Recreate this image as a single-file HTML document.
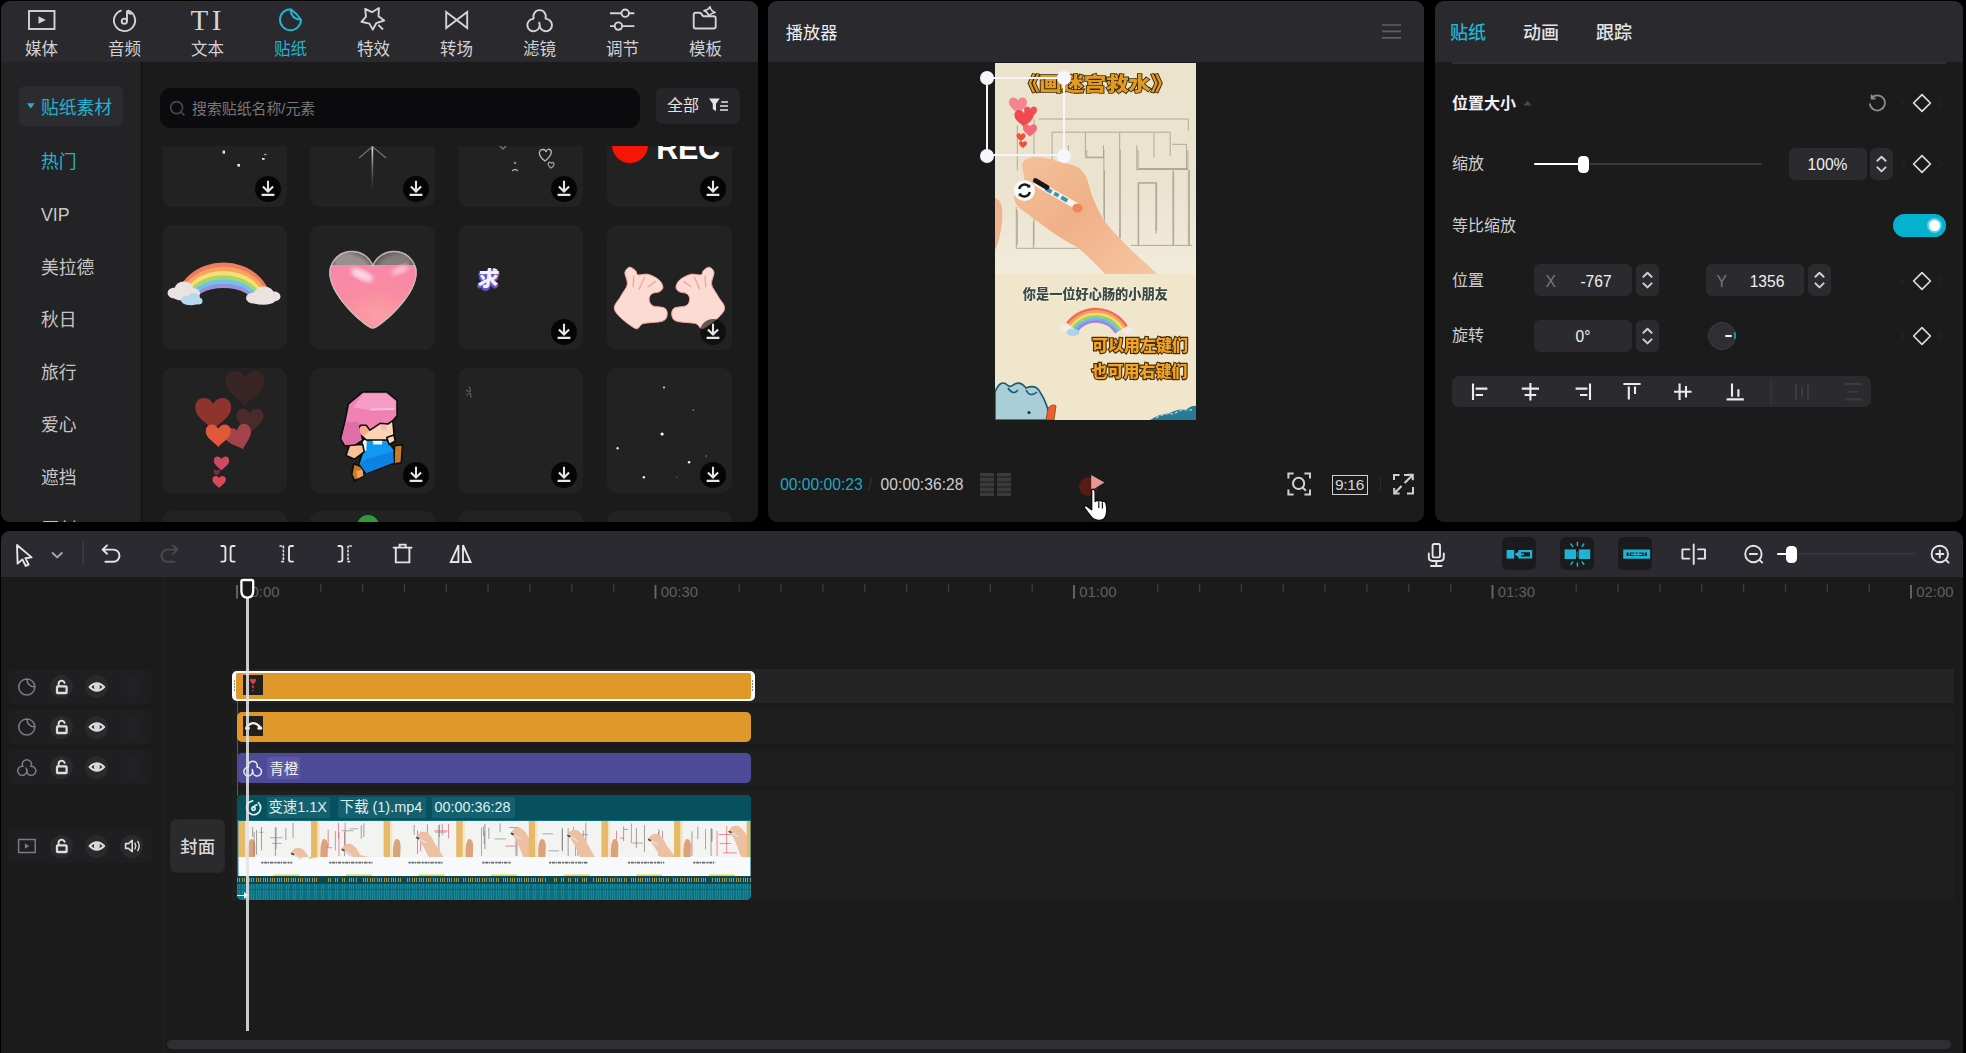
<!DOCTYPE html>
<html lang="zh-CN">
<head>
<meta charset="utf-8">
<title>剪映</title>
<style>
*{box-sizing:border-box;margin:0;padding:0}
html,body{width:1966px;height:1053px;overflow:hidden;background:#000}
body{font-family:"Liberation Sans","Noto Sans CJK SC",sans-serif;color:#e6e6e8;position:relative;font-size:15px}
.layer{position:absolute;left:0;top:0;width:1966px;height:1053px;background:#1b1b1c}
.layer *{position:absolute}
.layer span,.layer tspan,.layer text{position:static}
svg{overflow:visible}
.hdr{background:#29292e}
/* ===== left panel ===== */
#left{clip-path:inset(1px 1208px 531px 1px round 9px)}
.nav{top:0;width:83px;height:62px}
.nav b{left:0;right:0;top:36.5px;font-weight:400;font-size:16.5px;line-height:24px;color:#d2d2d5;text-align:center}
.nav.on b{color:#22b3d1}
.nav svg{left:0;top:0}
.cat{left:41px;font-size:17.8px;line-height:24px;color:#c6c6c9;white-space:nowrap}
.cell{width:125px;height:125px;background:#222223;border-radius:10px;overflow:hidden}
.dl{width:26px;height:26px;border-radius:50%;background:#050505}
.dl svg{left:0;top:0}
.hd{width:14px;height:14px;border-radius:50%;background:#f6f6fc}
.tab{top:20.6px;font-size:18px;line-height:24px;color:#e4e4e6;white-space:nowrap;font-weight:500}
.lb{left:1452px;font-size:16px;line-height:24px;color:#cdcdd0;white-space:nowrap}
.bx{background:#2b2b2f;border-radius:6px}
.vl{font-size:15.6px;line-height:24px;color:#f0f0f2;white-space:nowrap}
.rl{top:580.8px;font-size:14.9px;line-height:22px;color:#5f5f63;white-space:nowrap}
.ct{top:.6px;font-size:14.4px;line-height:24px;color:#dff0f2;white-space:nowrap}
</style>
</head>
<body>
<!-- ================= LEFT PANEL ================= -->
<div class="layer" id="left">
  <div class="hdr" style="left:0;top:0;width:760px;height:62px"></div>
  <div id="side" style="left:0;top:62px;width:141px;height:470px;background:#232325"></div>
  <div style="left:140.8px;top:62px;width:1.2px;height:470px;background:#0f0f11"></div>
  <div class="nav" style="left:0"><svg width="83" height="62" fill="none" stroke="#d4d4d6" stroke-width="1.9"><rect x="29" y="11" width="25.5" height="18"/><path d="M38.5 16.2 L45.8 20 L38.5 23.8Z" fill="#d4d4d6" stroke="none"/></svg><b>媒体</b></div>
  <div class="nav" style="left:83px"><svg width="83" height="62" fill="none" stroke="#d4d4d6" stroke-width="1.9"><path d="M44.8 10.4 A10.6 10.6 0 1 1 38.6 10.3"/><circle cx="41.3" cy="21.2" r="2.6"/><path d="M44 21.2 V10.6 Q45.2 13.4 48.6 14"/></svg><b>音频</b></div>
  <div class="nav" style="left:166px"><span style="position:absolute;left:24.5px;top:3.5px;font-family:'Liberation Serif',serif;font-size:29px;line-height:32px;letter-spacing:3.5px;color:#d4d4d6">TI</span><b>文本</b></div>
  <div class="nav on" style="left:249px"><svg width="83" height="62" fill="none" stroke="#22b3d1" stroke-width="2"><path d="M41.5 9.2 A10.5 10.5 0 1 0 52 19.7 Q47.6 13.2 41.5 9.2 Q42 19.2 52 19.7" stroke-linejoin="round"/></svg><b>贴纸</b></div>
  <div class="nav" style="left:332px"><svg width="83" height="62" fill="none" stroke="#d4d4d6" stroke-width="1.9" stroke-linejoin="miter"><path d="M33.2 8.9 L40 12.2 L46.9 8 L46.5 16.3 L52.2 20.5 L44.2 23.2 L40.8 29.6 L37.4 23.6 L29.4 21.8 L34 16.7Z" stroke-linejoin="round"/><path d="M46.3 24.9 L51 29.5"/></svg><b>特效</b></div>
  <div class="nav" style="left:415px"><svg width="83" height="62" fill="none" stroke="#d4d4d6" stroke-width="1.9" stroke-linejoin="miter"><path d="M31.2 12 L52.2 28 V12 L31.2 28Z"/></svg><b>转场</b></div>
  <div class="nav" style="left:498px"><svg width="83" height="62" fill="none" stroke="#d4d4d6" stroke-width="1.9"><path d="M35.9 18.8 A6.2 6.2 0 1 1 47.3 18.8"/><path d="M40.9 22 A6.2 6.2 0 1 1 35.9 18.9"/><path d="M47.3 18.9 A6.2 6.2 0 1 1 41.6 24.6"/></svg><b>滤镜</b></div>
  <div class="nav" style="left:581px"><svg width="83" height="62" fill="none" stroke="#d4d4d6" stroke-width="1.9"><path d="M29 13.2 H40.4 M48 13.2 H53.4 M29 26.1 H33.6 M41.2 26.1 H53.4"/><circle cx="44.2" cy="13.2" r="3.7"/><circle cx="37.4" cy="26.1" r="3.7"/></svg><b>调节</b></div>
  <div class="nav" style="left:664px"><svg width="83" height="62" fill="none" stroke="#d4d4d6" stroke-width="1.9" stroke-linejoin="round"><path d="M31.7 12.7 H35.6 Q36.6 12.7 37.2 13.6 L38.4 15.4 Q39 16.3 40 16.3 H49.7 Q51.7 16.3 51.7 18.3 V26.5 Q51.7 28.5 49.7 28.5 H31.7 Q29.7 28.5 29.7 26.5 V14.7 Q29.7 12.7 31.7 12.7Z"/><path d="M46 6.8 Q46.8 10.8 51.2 12.5 Q47 13.2 44.9 16 Q44 12.2 40 10.6 Q44.4 10 46 6.8Z" fill="#29292e" stroke-width="1.7"/></svg><b>模板</b></div>
  <div style="left:18.5px;top:86px;width:104.5px;height:40px;background:#2c2c30;border-radius:6px"></div>
  <svg style="left:25.6px;top:102.4px" width="10" height="8"><path d="M1 1.2 H8.6 L4.8 6.4Z" fill="#22b3d1"/></svg>
  <div class="cat" style="top:95.5px;color:#22b3d1;font-size:17.8px">贴纸素材</div>
  <div class="cat" style="top:150.0px;color:#22b3d1">热门</div>
  <div class="cat" style="top:203.0px">VIP</div>
  <div class="cat" style="top:255.5px">美拉德</div>
  <div class="cat" style="top:308.0px">秋日</div>
  <div class="cat" style="top:360.5px">旅行</div>
  <div class="cat" style="top:413.0px">爱心</div>
  <div class="cat" style="top:465.5px">遮挡</div>
  <div class="cat" style="top:518.0px">原创</div>
  <div style="left:160px;top:88px;width:480px;height:40px;background:#0b0b0d;border-radius:11px"></div>
  <svg style="left:168px;top:99px" width="20" height="20" fill="none" stroke="#4a4a4e" stroke-width="1.6"><circle cx="8.6" cy="8.6" r="6"/><path d="M13 13 L16.4 16.4"/></svg>
  <div style="left:192px;top:98px;font-size:14.9px;line-height:22px;color:#77777b;white-space:nowrap">搜索贴纸名称/元素</div>
  <div style="left:656px;top:88px;width:84px;height:36px;background:#26262a;border-radius:6px"></div>
  <div style="left:667px;top:94px;font-size:16px;line-height:24px;color:#e4e4e6;white-space:nowrap">全部</div>
  <svg style="left:708px;top:97px" width="22" height="18" fill="#e4e4e6"><path d="M1 1.6 H11.8 L8 6.8 V14.2 L4.8 12 V6.8Z"/><path d="M13.2 4.2 H20 V5.8 H13.2Z M12 8.2 H20 V9.8 H12Z M12 12.2 H20 V13.8 H12Z"/></svg>
  <div id="grid" style="left:141px;top:146px;width:620px;height:400px;overflow:hidden">
   <div style="left:-141px;top:-146px;width:760px;height:560px">
    <!-- row 0 -->
    <div class="cell" style="left:161.5px;top:82px">
      <svg style="left:0;top:0" width="125" height="125" fill="#e8e8e8"><rect x="60.6" y="68.6" width="2.4" height="3"/><rect x="102" y="71.8" width="2.6" height="1.4" opacity=".6"/><rect x="100" y="76" width="2.6" height="1.8"/><rect x="75.4" y="82" width="2.6" height="2.6"/></svg>
      <div class="dl" style="left:93.1px;top:93.6px"><svg width="26" height="26" fill="none" stroke="#e6e6e6" stroke-width="2.1"><path d="M13 4.8 V15 M7.9 10.6 L13 15.6 L18.1 10.6 M6.6 18.9 H19.4"/></svg></div>
    </div>
    <div class="cell" style="left:309.9px;top:82px">
      <svg style="left:0;top:0" width="125" height="125" fill="none"><defs><linearGradient id="ag" x1="0" y1="0" x2="0" y2="1"><stop offset="0" stop-color="#f4f0f8"/><stop offset="1" stop-color="#6a6670" stop-opacity="0"/></linearGradient></defs><rect x="61.6" y="64" width="1.6" height="46" fill="url(#ag)"/><path d="M49 76 L62.4 64.5 L76 76" stroke="#77737c" stroke-width="1.1"/></svg>
      <div class="dl" style="left:93.1px;top:93.6px"><svg width="26" height="26" fill="none" stroke="#e6e6e6" stroke-width="2.1"><path d="M13 4.8 V15 M7.9 10.6 L13 15.6 L18.1 10.6 M6.6 18.9 H19.4"/></svg></div>
    </div>
    <div class="cell" style="left:458.3px;top:82px">
      <svg style="left:0;top:0" width="125" height="125" fill="none" stroke="#bdbdbd" stroke-width="1.3"><path d="M87 79 C80 74 80 68 84.5 67.5 C87 67.3 88 69 88 70 C88.5 67.5 91 66.5 92.5 68 C95 71 91 76 87 79Z"/><path d="M93 86 C89.5 83.5 89.5 80.5 91.6 80.2 C92.8 80.2 93.2 81 93.3 81.6 C93.6 80.6 94.8 80 95.6 80.8 C96.8 82.4 95 84.8 93 86Z" stroke="#999"/><path d="M54 89 Q57 86 60 89" stroke="#aaa"/><path d="M42 64 L45 67 L48 64" stroke="#777"/><circle cx="57" cy="81" r=".6" stroke="#888"/></svg>
      <div class="dl" style="left:93.1px;top:93.6px"><svg width="26" height="26" fill="none" stroke="#e6e6e6" stroke-width="2.1"><path d="M13 4.8 V15 M7.9 10.6 L13 15.6 L18.1 10.6 M6.6 18.9 H19.4"/></svg></div>
    </div>
    <div class="cell" style="left:606.7px;top:82px">
      <div style="left:5.5px;top:45px;width:35.5px;height:35.5px;border-radius:50%;background:#f71505"></div>
      <div style="left:49.5px;top:48.4px;font-size:30.6px;line-height:36px;font-weight:700;color:#fff;letter-spacing:-.3px">REC</div>
      <div class="dl" style="left:93.1px;top:93.6px"><svg width="26" height="26" fill="none" stroke="#e6e6e6" stroke-width="2.1"><path d="M13 4.8 V15 M7.9 10.6 L13 15.6 L18.1 10.6 M6.6 18.9 H19.4"/></svg></div>
    </div>
    <!-- row 1 -->
    <div class="cell" style="left:161.5px;top:225px"><svg style="left:0;top:0" width="125" height="125"><defs><clipPath id="rc"><path d="M0 0 H125 V66 L86 76 H36 L0 62Z"/></clipPath><filter id="b1"><feGaussianBlur stdDeviation=".5"/></filter></defs><g clip-path="url(#rc)" filter="url(#b1)"><path d="M13.3 80 A48.2 42.6 0 0 1 109.7 80Z" fill="#ee7e62"/><path d="M16.2 80 A45.3 38.3 0 0 1 106.8 80Z" fill="#f6a75e"/><path d="M19.1 80 A42.4 34.1 0 0 1 103.9 80Z" fill="#f5df72"/><path d="M21.9 80 A39.6 29.8 0 0 1 101.1 80Z" fill="#a4d76c"/><path d="M24.8 80 A36.7 25.5 0 0 1 98.2 80Z" fill="#6fc0f1"/><path d="M27.7 80 A33.8 21.3 0 0 1 95.3 80Z" fill="#9a8fd8"/><path d="M30.6 80 A30.9 17.0 0 0 1 92.4 80Z" fill="#212122"/></g>
<g fill="#ebe3df"><ellipse cx="13" cy="68" rx="7.5" ry="5.5"/><ellipse cx="22" cy="64.5" rx="9.5" ry="8"/><ellipse cx="31" cy="68.5" rx="7" ry="5.5"/><ellipse cx="20" cy="71" rx="9" ry="4.5"/></g>
<g fill="#b7d9ee"><ellipse cx="25" cy="75" rx="6" ry="4.5"/><ellipse cx="32" cy="73" rx="6" ry="5"/><ellipse cx="36" cy="76" rx="4.5" ry="3.5"/><ellipse cx="29" cy="77.5" rx="7" ry="2.8"/></g>
<g fill="#ebe3df"><ellipse cx="92" cy="73" rx="8" ry="5.5"/><ellipse cx="102" cy="69" rx="10" ry="7.5"/><ellipse cx="112" cy="71.5" rx="6.5" ry="5"/><ellipse cx="101" cy="75.5" rx="12" ry="4.3"/></g></svg></div>
    <div class="cell" style="left:309.9px;top:225px"><svg style="left:0;top:0" width="125" height="125"><defs><clipPath id="hc"><path d="M62.8 39 C56 22 27 20 20 42 C14 64 46 94 58.5 102 Q62.8 105 67 102 C80 94 112 64 106 42 C99 20 70 22 62.8 39Z"/></clipPath><radialGradient id="hg" cx=".55" cy=".72" r=".7"><stop offset="0" stop-color="#fca0a4"/><stop offset=".5" stop-color="#f98ca2"/><stop offset="1" stop-color="#f788a8"/></radialGradient><filter id="b2"><feGaussianBlur stdDeviation="2.2"/></filter></defs>
<path d="M62.8 39 C56 22 27 20 20 42 C14 64 46 94 58.5 102 Q62.8 105 67 102 C80 94 112 64 106 42 C99 20 70 22 62.8 39Z" fill="#5e5959"/><g clip-path="url(#hc)"><path d="M22 28 Q40 22 58 36 L62 44 H24Z" fill="#9a9090" filter="url(#b2)"/><path d="M70 36 Q84 24 100 30 L102 44 H66Z" fill="#857c7c" filter="url(#b2)"/><rect x="10" y="40" width="105" height="70" fill="url(#hg)"/><ellipse cx="52" cy="50" rx="12" ry="5" fill="#fdd6e6" filter="url(#b2)" transform="rotate(25 52 50)"/><ellipse cx="90" cy="45" rx="9" ry="3.5" fill="#fcc4d8" filter="url(#b2)" transform="rotate(-25 90 45)"/><path d="M62.8 39 C56 22 27 20 20 42 C14 64 46 94 58.5 102 Q62.8 105 67 102 C80 94 112 64 106 42 C99 20 70 22 62.8 39Z" fill="none" stroke="#c9bcbc" stroke-width="3" opacity=".9"/></g></svg></div>
    <div class="cell" style="left:458.3px;top:225px"><div style="left:20px;top:40.6px;font-size:21px;line-height:26px;font-weight:900;color:#f4f2ff;text-shadow:1px 2px 0 #6a5cc8,-1px 2px 0 #6a5cc8,0 3px 1px #5a4cb8;transform:skewX(-6deg)">求</div><div class="dl" style="left:93.1px;top:93.6px"><svg width="26" height="26" fill="none" stroke="#e6e6e6" stroke-width="2.1"><path d="M13 4.8 V15 M7.9 10.6 L13 15.6 L18.1 10.6 M6.6 18.9 H19.4"/></svg></div></div>
    <div class="cell" style="left:606.7px;top:225px"><svg style="left:0;top:0" width="125" height="125"><path d="M17.9 47.5 C18.3 44.6 20.9 42.5 22.6 42.2 C24.4 41.9 27.2 44.4 28.6 45.7 C30.0 47.0 28.9 49.3 31.0 49.9 C33.0 50.5 37.6 48.5 41.1 49.3 C44.5 50.1 49.3 52.6 51.7 54.6 C54.2 56.7 55.7 59.8 55.9 61.8 C56.1 63.7 54.8 65.3 52.9 66.5 C51.1 67.7 46.4 67.5 44.6 68.9 C42.8 70.3 42.0 72.8 42.2 74.8 C42.4 76.8 43.2 79.4 45.8 80.8 C48.4 82.1 55.3 81.6 57.7 83.1 C60.1 84.7 60.5 88.1 60.1 90.3 C59.7 92.4 59.3 94.8 55.3 96.2 C51.3 97.6 40.9 97.4 36.3 98.6 C31.8 99.8 32.7 105.5 28.0 103.3 C23.2 101.1 10.2 90.9 7.8 85.5 C5.4 80.2 11.7 75.6 13.7 71.3 C15.8 66.9 19.6 63.3 20.3 59.4 C21.0 55.4 17.5 50.4 17.9 47.5Z M107.0 47.5 C106.6 44.6 104.0 42.5 102.2 42.2 C100.4 41.9 97.7 44.4 96.3 45.7 C94.9 47.0 96.0 49.3 93.9 49.9 C91.8 50.5 87.3 48.5 83.8 49.3 C80.3 50.1 75.6 52.6 73.1 54.6 C70.6 56.7 69.2 59.8 69.0 61.8 C68.8 63.7 70.1 65.3 71.9 66.5 C73.8 67.7 78.5 67.5 80.2 68.9 C82.0 70.3 82.8 72.8 82.6 74.8 C82.4 76.8 81.6 79.4 79.1 80.8 C76.5 82.1 69.6 81.6 67.2 83.1 C64.8 84.7 64.4 88.1 64.8 90.3 C65.2 92.4 65.6 94.8 69.6 96.2 C73.5 97.6 84.0 97.4 88.6 98.6 C93.1 99.8 92.1 105.5 96.9 103.3 C101.6 101.1 114.7 90.9 117.1 85.5 C119.4 80.2 113.2 75.6 111.1 71.3 C109.0 66.9 105.3 63.3 104.6 59.4 C103.9 55.4 107.4 50.4 107.0 47.5Z" fill="#fbdbd2" stroke="#f2a49c" stroke-width="1"/><path d="M26.8 51.1 L26.2 61.8 M37.5 52.3 L32.1 64.1 M48.2 56.4 L41.1 61.8 M98.1 51.1 L98.7 61.8 M87.4 52.3 L92.7 64.1 M76.7 56.4 L83.8 61.8" stroke="#f3a7a0" stroke-width="1.4" fill="none" stroke-linecap="round"/></svg><div class="dl" style="left:93.1px;top:93.6px;background:rgba(5,5,5,.62)"><svg width="26" height="26" fill="none" stroke="#e6e6e6" stroke-width="2.1"><path d="M13 4.8 V15 M7.9 10.6 L13 15.6 L18.1 10.6 M6.6 18.9 H19.4"/></svg></div></div>
    <!-- row 2 -->
    <div class="cell" style="left:161.5px;top:368px"><svg style="left:0;top:0" width="125" height="125"><path d="M83.0 9.2 C78.1 -0.5 63.5 0.5 63.5 13.2 C63.5 23.9 76.2 29.7 83.0 37.5 C89.8 29.7 102.5 23.9 102.5 13.2 C102.5 0.5 87.9 -0.5 83.0 9.2Z" fill="#3a2525" opacity="1"/><path d="M88.0 45.2 C84.6 38.5 74.5 39.2 74.5 48.0 C74.5 55.4 83.3 59.4 88.0 64.8 C92.7 59.4 101.5 55.4 101.5 48.0 C101.5 39.2 91.4 38.5 88.0 45.2Z" fill="#4a2a2b" opacity="1"/><path d="M51.2 36.0 C46.7 27.0 33.2 27.9 33.2 39.6 C33.2 49.5 44.9 54.9 51.2 62.1 C57.5 54.9 69.2 49.5 69.2 39.6 C69.2 27.9 55.7 27.0 51.2 36.0Z" fill="#8e342c" opacity="1"/><path d="M77.0 62.2 C73.6 55.5 63.5 56.2 63.5 65.0 C63.5 72.4 72.3 76.4 77.0 81.8 C81.7 76.4 90.5 72.4 90.5 65.0 C90.5 56.2 80.4 55.5 77.0 62.2Z" fill="#a3424b" transform="rotate(-18 77 69)" opacity="1"/><path d="M56.3 60.8 C53.2 54.5 43.8 55.1 43.8 63.2 C43.8 70.1 51.9 73.9 56.3 78.9 C60.7 73.9 68.8 70.1 68.8 63.2 C68.8 55.1 59.4 54.5 56.3 60.8Z" fill="#e2583b" opacity="1"/><path d="M59.5 91.1 C57.6 87.2 51.8 87.6 51.8 92.7 C51.8 96.9 56.8 99.3 59.5 102.4 C62.2 99.3 67.2 96.9 67.2 92.7 C67.2 87.6 61.4 87.2 59.5 91.1Z" fill="#cc4a63" opacity="1"/><path d="M54.7 102.9 C53.9 101.2 51.5 101.4 51.5 103.5 C51.5 105.3 53.6 106.3 54.7 107.6 C55.8 106.3 58.0 105.3 58.0 103.5 C58.0 101.4 55.5 101.2 54.7 102.9Z" fill="#7a2f3b" opacity="1"/><path d="M57.1 110.1 C55.4 106.8 50.4 107.1 50.4 111.5 C50.4 115.2 54.7 117.2 57.1 119.9 C59.5 117.2 63.9 115.2 63.9 111.5 C63.9 107.1 58.8 106.8 57.1 110.1Z" fill="#d94a56" opacity="1"/></svg></div>
    <div class="cell" style="left:309.9px;top:368px"><svg style="left:0;top:0" width="125" height="125"><defs><filter id="gb"><feGaussianBlur stdDeviation=".35"/></filter></defs><g filter="url(#gb)"><path d="M84.5 77.8 L92.5 76.6 L91.3 94.8 L83.9 96.0Z" fill="#c8792b" stroke="#0b0b0b" stroke-width="1.6" stroke-linejoin="round"/><path d="M43.8 95.7 L52.8 99.3 L53.3 107.7 L44.6 112.7 L41.7 106.7Z" fill="#c8792b" stroke="#0b0b0b" stroke-width="1.6" stroke-linejoin="round"/><path d="M46.2 102.9 L52.8 101.7 L53.3 107.7 L47.4 110.7Z" fill="#f2a25a"/><path d="M52.8 71.6 L76.7 71.6 L84.1 81.4 L84.1 94.8 L71.9 99.6 L56.3 105.5 L48.9 96.0 L52.8 83.8Z" fill="#0b9af0" stroke="#0b0b0b" stroke-width="1.6" stroke-linejoin="round"/><path d="M56.3 90.9 L82.7 83.8 L83.9 94.5 L71.9 99.3 L56.3 105.3 L49.4 96.0Z" fill="#0a82e2"/><path d="M52.8 72.0 L56.9 72.0 L56.3 82.6 L52.8 83.8Z" fill="#eef8ff"/><path d="M62.3 72.0 L72.5 72.0 L71.9 76.6 L63.5 76.6Z" fill="#eef8ff"/><path d="M56.3 56.2 L82.7 51.5 L84.1 67.0 L76.7 72.0 L56.3 72.0 L48.6 65.2 L49.2 58.6Z" fill="#fbd4b4" stroke="#0b0b0b" stroke-width="1.6" stroke-linejoin="round"/><path d="M48.6 58.6 L56.3 57.4 L58.7 63.4 L53.9 67.6 L48.6 65.2Z" fill="#f7a98a"/><path d="M70.1 56.2 L76.7 56.8 L76.7 62.2 L71.9 62.2Z" fill="#f6b8c6"/><path d="M39.6 76.8 L52.8 76.6 L54.2 83.8 L44.6 91.2 L36.0 87.6Z" fill="#fbc096" stroke="#0b0b0b" stroke-width="1.6" stroke-linejoin="round"/><path d="M76.7 69.4 L83.9 67.0 L85.3 73.0 L79.1 76.6Z" fill="#fbd4b4" stroke="#0b0b0b" stroke-width="1.6" stroke-linejoin="round"/><path d="M52.8 23.9 L76.7 23.9 L87.1 32.3 L87.1 47.9 L82.7 52.7 L77.9 56.0 L70.1 55.3 L65.3 58.6 L59.9 62.2 L56.3 57.2 L50.4 57.2 L47.7 62.2 L49.2 67.0 L53.3 72.0 L45.6 76.8 L34.8 78.0 L30.6 70.8 L34.8 53.8 L38.4 35.9Z" fill="#f081b2" stroke="#0b0b0b" stroke-width="1.6" stroke-linejoin="round"/><path d="M52.8 25.7 L76.1 25.7 L85.3 33.3 L85.3 41.9 L59.9 41.9 L43.2 39.5Z" fill="#f79cc4"/><path d="M36.0 53.8 L48.0 53.8 L51.6 70.6 L45.6 76.0 L35.4 76.8 L31.8 70.6Z" fill="#dd6ea6"/><path d="M59.9 40.7 L83.9 40.1 L83.9 41.9 L59.9 42.6Z" fill="#fbc2dc"/></g></svg><div class="dl" style="left:93.1px;top:93.6px"><svg width="26" height="26" fill="none" stroke="#e6e6e6" stroke-width="2.1"><path d="M13 4.8 V15 M7.9 10.6 L13 15.6 L18.1 10.6 M6.6 18.9 H19.4"/></svg></div></div>
    <div class="cell" style="left:458.3px;top:368px"><svg style="left:0;top:0" width="125" height="125" stroke="#6c6c6c" stroke-width="1" fill="none"><path d="M8 22 L12 24 M8.5 27.5 L12 24.6 M11.5 18.5 L12.5 23.5 M12.5 25 L13 29.5"/></svg><div class="dl" style="left:93.1px;top:93.6px"><svg width="26" height="26" fill="none" stroke="#e6e6e6" stroke-width="2.1"><path d="M13 4.8 V15 M7.9 10.6 L13 15.6 L18.1 10.6 M6.6 18.9 H19.4"/></svg></div></div>
    <div class="cell" style="left:606.7px;top:368px"><svg style="left:0;top:0" width="125" height="125"><circle cx="57.0" cy="19.6" r="1.0" fill="#ddd"/><circle cx="86.3" cy="42.0" r="0.8" fill="#999"/><circle cx="55.1" cy="66.0" r="1.6" fill="#fff"/><circle cx="10.6" cy="80.2" r="1.2" fill="#ddd"/><circle cx="82.1" cy="94.2" r="1.3" fill="#eee"/><circle cx="36.9" cy="109.2" r="1.2" fill="#eee"/><circle cx="69.8" cy="109.0" r="0.7" fill="#666"/><circle cx="99.3" cy="88.0" r="0.8" fill="#888"/></svg><div class="dl" style="left:93.1px;top:93.6px"><svg width="26" height="26" fill="none" stroke="#e6e6e6" stroke-width="2.1"><path d="M13 4.8 V15 M7.9 10.6 L13 15.6 L18.1 10.6 M6.6 18.9 H19.4"/></svg></div></div>
    <!-- row 3 -->
    <div class="cell" style="left:161.5px;top:510.5px"></div>
    <div class="cell" style="left:309.9px;top:510.5px"><div style="left:47px;top:4px;width:22px;height:22px;border-radius:50%;background:#2e9a3c"></div></div>
    <div class="cell" style="left:458.3px;top:510.5px"></div>
    <div class="cell" style="left:606.7px;top:510.5px"></div>
   </div>
  </div>
</div>
<!-- ================= PLAYER ================= -->
<div class="layer" id="player" style="clip-path:inset(1px 542px 531px 768px round 9px)">
  <div class="hdr" style="left:760px;top:0;width:670px;height:62px"></div>
  <div style="left:785.8px;top:20.8px;font-size:17.2px;line-height:24px;color:#f0f0f2;white-space:nowrap">播放器</div>
  <svg style="left:1380px;top:22px" width="24" height="20" stroke="#5f5f64" stroke-width="1.7"><path d="M2 3 H21 M2 9.4 H21 M2 15.8 H21"/></svg>
  <!-- video -->
  <div style="left:995px;top:63px;width:201px;height:357px;background:#f0e6cc;overflow:hidden">
   <svg style="left:-995px;top:-63px" width="1966" height="1053" fill="none">
    <defs><linearGradient id="pg" x1="0" y1="0" x2="0" y2="1"><stop offset="0" stop-color="#ece3cd"/><stop offset=".6" stop-color="#ebe3d0"/><stop offset="1" stop-color="#f2ecdc"/></linearGradient>
    <linearGradient id="hg2" x1="0" y1="0" x2="1" y2="1"><stop offset="0" stop-color="#f4c29a"/><stop offset=".45" stop-color="#f0b088"/><stop offset="1" stop-color="#f6c8a4"/></linearGradient>
    <clipPath id="pc"><rect x="995" y="63" width="201" height="211"/></clipPath><clipPath id="vrc"><rect x="1050" y="300" width="100" height="33.5"/></clipPath><filter id="vb"><feGaussianBlur stdDeviation=".6"/></filter><filter id="vb2"><feGaussianBlur stdDeviation="1.2"/></filter></defs>
    <rect x="995" y="63" width="201" height="211" fill="url(#pg)"/>
    <g filter="url(#vb)"><path d="M1038.5 119.0 L1188.3 119.0" stroke="#a49e90" stroke-width=".85"/><path d="M1188.3 119.0 L1188.3 130.8" stroke="#a49e90" stroke-width=".85"/><path d="M1017.3 125.3 L1017.3 170.4" stroke="#a49e90" stroke-width=".85"/><path d="M1034.0 119.0 L1034.0 156.0" stroke="#a49e90" stroke-width=".85"/><path d="M1052.1 132.2 L1170.2 132.2" stroke="#a49e90" stroke-width=".85"/><path d="M1052.1 132.2 L1052.1 163.2" stroke="#a49e90" stroke-width=".85"/><path d="M1068.3 145.2 L1068.3 156.0" stroke="#a49e90" stroke-width=".85"/><path d="M1085.4 132.2 L1085.4 157.8" stroke="#a49e90" stroke-width=".85"/><path d="M1085.4 157.8 L1103.5 157.8" stroke="#a49e90" stroke-width=".85"/><path d="M1103.5 145.2 L1103.5 157.8" stroke="#a49e90" stroke-width=".85"/><path d="M1119.7 132.2 L1119.7 244.9" stroke="#a49e90" stroke-width=".85"/><path d="M1136.8 145.2 L1136.8 170.4" stroke="#a49e90" stroke-width=".85"/><path d="M1136.8 169.5 L1188.3 169.5" stroke="#a49e90" stroke-width=".85"/><path d="M1154.0 132.2 L1154.0 157.8" stroke="#a49e90" stroke-width=".85"/><path d="M1170.2 132.2 L1170.2 156.0" stroke="#a49e90" stroke-width=".85"/><path d="M1172.0 144.3 L1186.5 144.3" stroke="#a49e90" stroke-width=".85"/><path d="M1186.5 144.3 L1186.5 168.6" stroke="#a49e90" stroke-width=".85"/><path d="M1188.3 170.4 L1188.3 244.9" stroke="#a49e90" stroke-width=".85"/><path d="M1138.7 183.1 L1155.8 183.1" stroke="#a49e90" stroke-width=".85"/><path d="M1138.7 183.1 L1138.7 244.9" stroke="#a49e90" stroke-width=".85"/><path d="M1155.8 183.1 L1155.8 233.6" stroke="#a49e90" stroke-width=".85"/><path d="M1172.9 170.4 L1172.9 244.9" stroke="#a49e90" stroke-width=".85"/><path d="M1017.3 210.1 L1017.3 244.9" stroke="#a49e90" stroke-width=".85"/><path d="M1034.0 217.3 L1034.0 244.9" stroke="#a49e90" stroke-width=".85"/><path d="M1104.4 170.4 L1104.4 244.9" stroke="#a49e90" stroke-width=".85"/><path d="M1016.3 207.0 L1016.3 248.3" stroke="#a49e90" stroke-width=".85"/><path d="M1016.3 248.3 L1078.3 248.3" stroke="#a49e90" stroke-width=".85"/><path d="M1033.4 221.2 L1033.4 248.3" stroke="#a49e90" stroke-width=".85"/><path d="M1120.3 150.0 L1120.3 238.3" stroke="#a49e90" stroke-width=".85"/><path d="M1138.1 168.5 L1187.9 168.5" stroke="#a49e90" stroke-width=".85"/><path d="M1138.1 150.0 L1138.1 168.5" stroke="#a49e90" stroke-width=".85"/><path d="M1187.9 150.0 L1187.9 168.5" stroke="#a49e90" stroke-width=".85"/><path d="M1138.1 182.8 L1156.6 182.8" stroke="#a49e90" stroke-width=".85"/><path d="M1138.1 182.8 L1138.1 245.4" stroke="#a49e90" stroke-width=".85"/><path d="M1156.6 182.8 L1156.6 231.2" stroke="#a49e90" stroke-width=".85"/><path d="M1173.7 171.4 L1173.7 245.4" stroke="#a49e90" stroke-width=".85"/><path d="M1189.4 169.9 L1189.4 245.4" stroke="#a49e90" stroke-width=".85"/><path d="M1131.0 245.4 L1192.2 245.4" stroke="#a49e90" stroke-width=".85"/><path d="M1103.9 150.0 L1103.9 217.0" stroke="#a49e90" stroke-width=".85"/><path d="M1086.8 150.0 L1086.8 157.1" stroke="#a49e90" stroke-width=".85"/><path d="M1086.8 157.1 L1103.9 157.1" stroke="#a49e90" stroke-width=".85"/></g>
    <path d="M995 198 Q1004 200 1002 222 Q1000 240 995 250Z" fill="#f0b48c" filter="url(#vb)"/>
    <g filter="url(#vb)"><path d="M1023.4 161.4 C1024.9 159.5 1027.8 158.0 1031.3 157.4 C1034.7 156.8 1039.6 157.2 1044.1 157.8 C1048.6 158.5 1054.0 160.3 1058.3 161.4 C1062.6 162.5 1066.2 163.1 1069.7 164.2 C1073.3 165.4 1076.8 166.1 1079.7 168.5 C1082.5 170.9 1084.9 174.5 1086.8 178.5 C1088.7 182.5 1089.2 187.5 1091.1 192.7 C1093.0 198.0 1095.6 204.6 1098.2 209.8 C1100.8 215.1 1103.2 219.3 1106.8 224.1 C1110.3 228.8 1115.1 233.6 1119.6 238.3 C1124.1 243.1 1129.3 248.3 1133.8 252.6 C1138.3 256.8 1142.8 260.4 1146.6 264.0 C1150.4 267.5 1154.9 271.6 1156.6 273.9 C1158.3 276.3 1164.9 277.5 1156.6 278.2 C1148.3 278.9 1115.5 279.1 1106.8 278.2 C1098.0 277.3 1106.5 275.9 1103.9 272.8 C1101.3 269.7 1095.4 263.8 1091.1 259.7 C1086.8 255.6 1083.0 251.7 1078.3 248.3 C1073.5 244.8 1067.3 242.0 1062.6 239.0 C1057.8 236.1 1053.8 233.3 1049.8 230.5 C1045.7 227.6 1042.2 224.8 1038.4 221.9 C1034.6 219.1 1030.3 215.9 1027.0 213.4 C1023.7 210.9 1020.6 209.5 1018.4 207.0 C1016.3 204.5 1014.4 201.3 1014.2 198.4 C1013.9 195.6 1015.3 193.2 1017.0 189.9 C1018.7 186.6 1023.2 182.1 1024.1 178.5 C1025.0 174.9 1022.5 171.4 1022.4 168.5 C1022.3 165.7 1021.9 163.2 1023.4 161.4Z" fill="url(#hg2)" clip-path="url(#pc)"/>
    <path d="M1037.0 183.5 L1078.3 207.0" stroke="#f4f4f0" stroke-width="6.5" stroke-linecap="round"/>
    <path d="M1045.5 188.5 L1069.7 202.0" stroke="#3a94b0" stroke-width="4" stroke-dasharray="7 3 5 3"/>
    <path d="M1035.5 180.6 L1046.9 187.3" stroke="#1a1614" stroke-width="5" stroke-linecap="round"/>
    <ellipse cx="1077.5" cy="208.1" rx="5.2" ry="4.6" fill="#ee8a5a"/></g>
    <g filter="url(#vb)"><path d="M1018.0 100.5 C1015.8 96.0 1009.0 96.5 1009.0 102.3 C1009.0 107.2 1014.9 110.0 1018.0 113.5 C1021.1 110.0 1027.0 107.2 1027.0 102.3 C1027.0 96.5 1020.2 96.0 1018.0 100.5Z" fill="#f5858e" opacity="1"/><path d="M1030.5 108.8 C1028.9 105.5 1024.0 105.8 1024.0 110.0 C1024.0 113.6 1028.2 115.6 1030.5 118.2 C1032.8 115.6 1037.0 113.6 1037.0 110.0 C1037.0 105.8 1032.1 105.5 1030.5 108.8Z" fill="#f0505a" opacity="1"/><path d="M1024.0 113.2 C1021.6 108.5 1014.5 109.0 1014.5 115.2 C1014.5 120.4 1020.7 123.2 1024.0 127.0 C1027.3 123.2 1033.5 120.4 1033.5 115.2 C1033.5 109.0 1026.4 108.5 1024.0 113.2Z" fill="#f04a4e" opacity="1"/><path d="M1030.0 126.5 C1028.2 123.0 1023.0 123.3 1023.0 127.9 C1023.0 131.8 1027.5 133.8 1030.0 136.7 C1032.5 133.8 1037.0 131.8 1037.0 127.9 C1037.0 123.3 1031.8 123.0 1030.0 126.5Z" fill="#f5697a" opacity="1"/><path d="M1021.0 134.8 C1019.9 132.5 1016.5 132.7 1016.5 135.7 C1016.5 138.1 1019.4 139.5 1021.0 141.3 C1022.6 139.5 1025.5 138.1 1025.5 135.7 C1025.5 132.7 1022.1 132.5 1021.0 134.8Z" fill="#f0523c" opacity="1"/><path d="M1023.0 142.5 C1022.0 140.5 1019.0 140.7 1019.0 143.3 C1019.0 145.5 1021.6 146.7 1023.0 148.3 C1024.4 146.7 1027.0 145.5 1027.0 143.3 C1027.0 140.7 1024.0 140.5 1023.0 142.5Z" fill="#f0503a" opacity="1"/></g>
    <!-- lower part -->
    <g filter="url(#vb)"><g><path d="M1067.3 323.3 A36.0 36.0 0 0 1 1126.6 326.4" stroke="#ee6a5c" stroke-width="2.7" fill="none"/><path d="M1069.3 324.8 A33.5 33.5 0 0 1 1124.5 327.7" stroke="#f6a058" stroke-width="2.7" fill="none"/><path d="M1071.2 326.3 A31.1 31.1 0 0 1 1122.4 329.0" stroke="#f5dc6a" stroke-width="2.7" fill="none"/><path d="M1073.2 327.7 A28.6 28.6 0 0 1 1120.3 330.3" stroke="#8fd46c" stroke-width="2.7" fill="none"/><path d="M1075.1 329.2 A26.2 26.2 0 0 1 1118.2 331.5" stroke="#6fb4f1" stroke-width="2.7" fill="none"/><path d="M1077.0 330.7 A23.7 23.7 0 0 1 1116.1 332.8" stroke="#9a86d8" stroke-width="2.7" fill="none"/></g>
    <ellipse cx="1065" cy="328" rx="5.5" ry="3" fill="#f1eaee"/><ellipse cx="1073" cy="332.4" rx="6.4" ry="3.6" fill="#a8d4ee"/><ellipse cx="1128" cy="330.6" rx="6" ry="2.8" fill="#f1eaec"/></g>
    <!-- dragon -->
    <g filter="url(#vb)"><path d="M995 392 Q1000 380 1006 384 Q1010 388 1013 385 Q1020 380 1026 388 Q1036 384 1040 392 Q1048 404 1050 420 H995Z" fill="#a9ced7" stroke="#1f5a70" stroke-width="1.6"/>
    <path d="M1008 388 Q1013 396 1018 390 M1026 390 Q1030 398 1037 392" stroke="#1f5a70" stroke-width="1.6"/>
    <path d="M1046 420 L1048 408 Q1053 403 1056 406 L1054 420Z" fill="#e8602a" stroke="#8a3a1a" stroke-width=".8"/><circle cx="1029" cy="412.5" r="1.6" fill="#173a4a"/>
    <path d="M1150 420 Q1160 413 1168 414 Q1178 408 1186 410 Q1192 405 1196 406 V420Z" fill="#2a7a96"/><path d="M1156 418 Q1166 412 1174 414 Q1182 408 1192 410" stroke="#9fd0e0" stroke-width="1.4" stroke-dasharray="3 2"/></g>
   </svg>
   <div class="vt" style="left:21.7px;top:8.6px;font-size:19.5px;line-height:24px;font-weight:900;color:#e39b1f;letter-spacing:-.3px;transform:scaleX(1.16);transform-origin:0 0;-webkit-text-stroke:1.7px #3b2a12;paint-order:stroke fill;white-space:nowrap;filter:blur(.4px)">《画迷宫救水》</div>
   <div class="vt" style="left:27.8px;top:222.8px;font-size:13.2px;line-height:18px;font-weight:900;color:#3e4a40;white-space:nowrap;text-shadow:0 0 1.5px #fff,0 0 1.5px #fff;filter:blur(.55px)">你是一位好心肠的小朋友</div>
   <div class="vt" style="left:97px;top:272.5px;font-size:16px;line-height:20px;font-weight:900;color:#f2a324;-webkit-text-stroke:2.3px #452c0c;paint-order:stroke fill;white-space:nowrap;filter:blur(.5px)">可以用左键们</div>
   <div class="vt" style="left:96.5px;top:299px;font-size:16px;line-height:20px;font-weight:900;color:#f2a324;-webkit-text-stroke:2.3px #452c0c;paint-order:stroke fill;white-space:nowrap;filter:blur(.5px)">也可用右键们</div>
  </div>
  <!-- selection box -->
  <div style="left:986px;top:77px;width:78.5px;height:79px;border:2px solid #f4f4fb"></div>
  <div class="hd" style="left:980px;top:71px"></div><div class="hd" style="left:1056.5px;top:71px"></div><div class="hd" style="left:980px;top:148.5px"></div><div class="hd" style="left:1056.5px;top:148.5px"></div>
  <div style="left:1014px;top:179.5px;width:21px;height:21px;border-radius:50%;background:#fafafa"></div>
  <svg style="left:1014px;top:179.5px" width="21" height="21" fill="none" stroke="#15161a" stroke-width="2.3"><path d="M5.2 9 A5.6 5.6 0 0 1 15.2 6.8 M15.8 12 A5.6 5.6 0 0 1 5.8 14.2"/><path d="M13 7.4 L16.4 7.6 L16.2 4.2Z M8 13.6 L4.6 13.4 L4.8 16.8Z" fill="#15161a" stroke="none"/></svg>
  <!-- controls -->
  <div style="left:780.2px;top:473px;font-size:15.6px;line-height:24px;color:#1fa7c4;white-space:nowrap;letter-spacing:0">00:00:00:23</div>
  <div style="left:868px;top:473px;font-size:15.6px;line-height:24px;color:#333336">/</div>
  <div style="left:880.6px;top:473px;font-size:15.6px;line-height:24px;color:#cfcfd1;white-space:nowrap;letter-spacing:.05px">00:00:36:28</div>
  <div style="left:979.5px;top:472.5px;width:14px;height:23px;background:repeating-linear-gradient(180deg,#3b3b3d 0 3.4px,#2a2a2b 3.4px 4.9px)"></div>
  <div style="left:997px;top:472.5px;width:14px;height:23px;background:repeating-linear-gradient(180deg,#3b3b3d 0 3.4px,#2a2a2b 3.4px 4.9px)"></div>
  <div style="left:1078.5px;top:476.5px;width:19px;height:19px;border-radius:50%;background:#581a15"></div>
  <svg style="left:1088px;top:472px" width="20" height="22"><path d="M3.2 3 L16.4 10.6 L3.2 18.4Z" fill="#e69a98"/></svg>
  <svg style="left:1082px;top:487px" width="30" height="36" stroke-linejoin="round"><path d="M9.6 2.6 Q12.6 1.6 13.2 4.4 V14.4 Q14.6 12.6 16.8 14 Q18.6 12.6 20.4 14.6 Q22.6 13.6 24 16 Q25.4 22 24.4 27 Q23.4 33 17.6 33.4 Q11.4 33.8 8.4 29 L2.4 21 Q1.6 18.6 4.2 18.6 L9.6 22.6Z" fill="#fff" stroke="#101010" stroke-width="1.5"/><path d="M16.8 15 V21 M20.4 15.4 V21.4" stroke="#101010" stroke-width="1.2"/></svg>
  <svg style="left:1286px;top:471px" width="28" height="26" fill="none" stroke="#d0d0d2" stroke-width="2"><path d="M2.4 7.4 V2.4 H7.6 M18.4 2.4 H24 V7.4 M24 18.6 V23.6 H18.4 M7.6 23.6 H2.4 V18.6"/><circle cx="12.6" cy="12.4" r="5.6"/><path d="M16.6 16.6 L20 19.8"/></svg>
  <div style="left:1331.5px;top:474.5px;width:36px;height:20px;border:1.6px solid #d0d0d2"></div>
  <div style="left:1331.5px;top:473px;width:36px;font-size:15.5px;line-height:23px;color:#d6d6d8;text-align:center;letter-spacing:-.3px">9:16</div>
  <div style="left:1379.5px;top:476px;width:1.4px;height:16px;background:#2c2c2e"></div>
  <svg style="left:1392px;top:473px" width="24" height="24" fill="none" stroke="#d0d0d2" stroke-width="2"><path d="M2 7 V2 H7.6 M21 14 V20.6 H15 M12 2 H17.4"/><path d="M12.6 10 L20.4 2.2 M15.4 1.8 H20.8 V7.2 M9.6 13 L2.6 20 M2.2 15 V20.6 H7.6"/></svg>
</div>
<!-- ================= RIGHT ================= -->
<div class="layer" id="right" style="clip-path:inset(1px 3px 531px 1435px round 9px)">
  <div class="hdr" style="left:1430px;top:0;width:540px;height:62px"></div>
  <div class="tab" style="left:1450px;color:#22b3d1">贴纸</div>
  <div class="tab" style="left:1523px">动画</div>
  <div class="tab" style="left:1596px">跟踪</div>
  <div style="left:1452px;top:62px;width:494px;height:1.5px;background:#303034"></div>
  <div style="left:1452px;top:91.5px;font-size:16px;line-height:24px;font-weight:700;color:#f2f2f4;white-space:nowrap">位置大小</div>
  <svg style="left:1523px;top:100px" width="10" height="7"><path d="M.6 5.6 L4.6 .8 L8.6 5.6Z" fill="#4a4a4e"/></svg>
  <svg style="left:1867px;top:93px" width="22" height="22" fill="none" stroke="#8d8d91" stroke-width="1.7"><path d="M4.4 5.2 A7.6 7.6 0 1 1 2.8 10.4"/><path d="M4.6 1.6 V5.6 H8.6" stroke-linejoin="round"/></svg>
  <svg style="left:1900px;top:92.3px" width="44" height="22" fill="none"><path d="M22 2.6 L30.4 11 L22 19.4 L13.6 11Z" stroke="#dcdcde" stroke-width="1.7" stroke-linejoin="round"/><path d="M5.4 6.6 L1.6 11 L5.4 15.4 M38.6 6.6 L42.4 11 L38.6 15.4" stroke="#232325" stroke-width="1.5"/></svg>
  <div class="lb" style="top:152.2px">缩放</div>
  <div style="left:1534px;top:163px;width:228px;height:2px;background:#3a3a3e;border-radius:1px"></div>
  <div style="left:1534px;top:162.6px;width:48px;height:2.8px;background:#fff;border-radius:1px"></div>
  <div style="left:1578px;top:155.5px;width:11px;height:17.5px;background:#fff;border-radius:4.5px"></div>
  <div class="bx" style="left:1788.5px;top:148px;width:78px;height:32px"></div>
  <div class="vl" style="left:1788.5px;top:153.2px;width:78px;text-align:center">100%</div>
  <div class="bx" style="left:1870px;top:148px;width:23px;height:32px"></div><svg style="left:1870px;top:148px" width="23" height="32" fill="none" stroke="#cfcfd1" stroke-width="2" stroke-linecap="round" stroke-linejoin="round"><path d="M7.4 12.8 L11.5 8.8 L15.6 12.8 M7.4 19.4 L11.5 23.4 L15.6 19.4"/></svg>
  <svg style="left:1900px;top:153px" width="44" height="22" fill="none"><path d="M22 2.6 L30.4 11 L22 19.4 L13.6 11Z" stroke="#dcdcde" stroke-width="1.7" stroke-linejoin="round"/><path d="M5.4 6.6 L1.6 11 L5.4 15.4 M38.6 6.6 L42.4 11 L38.6 15.4" stroke="#232325" stroke-width="1.5"/></svg>
  <div class="lb" style="top:213.5px">等比缩放</div>
  <div style="left:1893px;top:213.7px;width:52.6px;height:23px;border-radius:12px;background:#04b1cf"></div>
  <div style="left:1926.5px;top:218px;width:15px;height:15px;border-radius:50%;background:#5cd0e4"></div>
  <div style="left:1928.5px;top:220px;width:11px;height:11px;border-radius:50%;background:#fff"></div>
  <div class="lb" style="top:268.6px">位置</div>
  <div class="bx" style="left:1533.6px;top:264.4px;width:98.8px;height:32px"></div>
  <div class="vl" style="left:1543.6px;top:269.6px;width:14px;text-align:center;color:#77777b">X</div>
  <div class="vl" style="left:1570px;top:269.6px;width:52px;text-align:center">-767</div>
  <div class="bx" style="left:1636px;top:264.4px;width:23px;height:32px"></div><svg style="left:1636px;top:264.4px" width="23" height="32" fill="none" stroke="#cfcfd1" stroke-width="2" stroke-linecap="round" stroke-linejoin="round"><path d="M7.4 12.8 L11.5 8.8 L15.6 12.8 M7.4 19.4 L11.5 23.4 L15.6 19.4"/></svg>
  <div class="bx" style="left:1705.6px;top:264.4px;width:98.6px;height:32px"></div>
  <div class="vl" style="left:1714.8px;top:269.6px;width:14px;text-align:center;color:#77777b">Y</div>
  <div class="vl" style="left:1741px;top:269.6px;width:52px;text-align:center">1356</div>
  <div class="bx" style="left:1807.6px;top:264.4px;width:23px;height:32px"></div><svg style="left:1807.6px;top:264.4px" width="23" height="32" fill="none" stroke="#cfcfd1" stroke-width="2" stroke-linecap="round" stroke-linejoin="round"><path d="M7.4 12.8 L11.5 8.8 L15.6 12.8 M7.4 19.4 L11.5 23.4 L15.6 19.4"/></svg>
  <svg style="left:1900px;top:269.6px" width="44" height="22" fill="none"><path d="M22 2.6 L30.4 11 L22 19.4 L13.6 11Z" stroke="#dcdcde" stroke-width="1.7" stroke-linejoin="round"/><path d="M5.4 6.6 L1.6 11 L5.4 15.4 M38.6 6.6 L42.4 11 L38.6 15.4" stroke="#232325" stroke-width="1.5"/></svg>
  <div class="lb" style="top:324px">旋转</div>
  <div class="bx" style="left:1533.6px;top:319.7px;width:98.8px;height:32px"></div>
  <div class="vl" style="left:1533.6px;top:324.9px;width:98.8px;text-align:center">0°</div>
  <div class="bx" style="left:1636px;top:319.7px;width:23px;height:32px"></div><svg style="left:1636px;top:319.7px" width="23" height="32" fill="none" stroke="#cfcfd1" stroke-width="2" stroke-linecap="round" stroke-linejoin="round"><path d="M7.4 12.8 L11.5 8.8 L15.6 12.8 M7.4 19.4 L11.5 23.4 L15.6 19.4"/></svg>
  <div style="left:1707.6px;top:322px;width:28px;height:28px;border-radius:50%;background:#2f2f33;border:1.4px solid #3e3e42"></div>
  <div style="left:1724.6px;top:334.6px;width:7.4px;height:2.8px;background:#f4f4f6;border-radius:1px"></div>
  <div style="left:1734.4px;top:332.4px;width:1.6px;height:7px;background:#1a90a8;border-radius:1px"></div>
  <svg style="left:1900px;top:324.9px" width="44" height="22" fill="none"><path d="M22 2.6 L30.4 11 L22 19.4 L13.6 11Z" stroke="#dcdcde" stroke-width="1.7" stroke-linejoin="round"/><path d="M5.4 6.6 L1.6 11 L5.4 15.4 M38.6 6.6 L42.4 11 L38.6 15.4" stroke="#232325" stroke-width="1.5"/></svg>
  <div class="bx" style="left:1452.2px;top:375.5px;width:419px;height:31px;border-radius:7px"></div>
  <svg style="left:1452px;top:375.5px" width="420" height="31" fill="none" stroke="#ececee" stroke-width="2.1">
   <path d="M21 7.4 V24 M23.6 12.6 H35.4 M23.6 19 H31"/>
   <path d="M78.4 7 V24.4 M69.8 12.6 H87 M72.6 19 H84.2"/>
   <path d="M138 7.4 V24 M123.6 12.6 H135.4 M128 19 H135.4"/>
   <path d="M171.4 8 H188.6 M176.8 10.6 V23.6 M183 10.6 V18"/>
   <path d="M222 15.7 H239.6 M227.6 7.4 V24 M234 10 V21.4"/>
   <path d="M274.6 23.4 H291.8 M280 7.6 V20.8 M286.4 13.2 V20.8"/>
   <path d="M318.9 3.5 V27.5" stroke="#39393d" stroke-width="1.3"/>
   <g stroke="#3c3c40"><path d="M344 7.4 V24 M356 7.4 V24 M350 11 V20.4"/><path d="M393 8 H410 M393 23.4 H410 M396.6 15.7 H406.4"/></g>
  </svg>
</div>
<!-- ================= TIMELINE ================= -->
<div class="layer" id="tl" style="clip-path:inset(531px 3px 0 1px round 9px 9px 0 0)">
  <div class="hdr" style="left:0;top:531px;width:1966px;height:46px;background:#2a2a30"></div>
  <svg style="left:0;top:531px" width="500" height="46" fill="none" stroke="#e4e4e6" stroke-width="1.9" stroke-linejoin="round" stroke-linecap="round">
   <path d="M17 14 L17.6 32.6 L22.4 28.4 L25.8 35 L28.6 33.6 L25.4 27.2 L31.6 26.4Z"/>
   <path d="M52.6 22 L57.2 26.4 L61.8 22" stroke="#a8a8ac"/>
   <path d="M83.2 10.5 V33.5" stroke="#3d3d42" stroke-width="1.4"/>
   <path d="M103 18.6 H113.4 A6 6 0 0 1 113.4 30.8 H105.4 M107 14.4 L102.6 18.6 L107 22.8"/>
   <g stroke="#4a4a4f"><path d="M177 18.6 H167.6 A6 6 0 0 0 167.6 30.8 H174.6 M173 14.4 L177.4 18.6 L173 22.8"/></g>
   <path d="M221.4 15 H223.4 Q225.4 15 225.4 17 V28.6 Q225.4 30.6 223.4 30.6 H221.4 M234.6 15 H232.6 Q230.6 15 230.6 17 V28.6 Q230.6 30.6 232.6 30.6 H234.6"/>
   <path d="M293 15 H291 Q289 15 289 17 V28.6 Q289 30.6 291 30.6 H293"/><path d="M280 15 H283.4 V30.6 H280" stroke-dasharray="1.6 2.2" stroke-width="1.6"/>
   <path d="M338.4 15 H340.4 Q342.4 15 342.4 17 V28.6 Q342.4 30.6 340.4 30.6 H338.4"/><path d="M351.4 15 H348 V30.6 H351.4" stroke-dasharray="1.6 2.2" stroke-width="1.6"/>
   <path d="M393.6 16.6 H411.6 M399.6 16.4 V13.6 H405.6 V16.4 M395.8 16.8 V31.4 H409.4 V16.8" stroke-linejoin="miter"/>
   <path d="M458.4 14.2 V31 H450.8Z M463 14.2 V31 H470.6Z" stroke-linejoin="miter"/>
  </svg>
  <div style="left:1502.2px;top:537.2px;width:33.8px;height:33.2px;background:#1b1b1d;border-radius:6px"></div>
  <div style="left:1560.4px;top:537.2px;width:33.8px;height:33.2px;background:#1b1b1d;border-radius:6px"></div>
  <div style="left:1618.4px;top:537.2px;width:33.8px;height:33.2px;background:#1b1b1d;border-radius:6px"></div>
  <svg style="left:1400px;top:531px" width="566" height="46" fill="none" stroke="#e4e4e6" stroke-width="1.9" stroke-linecap="round" stroke-linejoin="round">
   <rect x="32.6" y="13" width="7.4" height="13.4" rx="1.6"/><path d="M28.8 22.4 V26.6 Q28.8 30 32.2 30 H40.4 Q43.8 30 43.8 26.6 V22.4 M36.3 30.4 V34.6 M31 35 H41.6"/>
   <path d="M77.7 11 V34" stroke="#2a2a2e" stroke-width="1.4"/>
   <g stroke="none" fill="#1fb4d2"><rect x="106.6" y="19" width="7.6" height="8.6"/><path d="M118.4 19 H132.2 V27.6 H118.4Z M121 21.2 V25.4 H130 V21.2Z" fill-rule="evenodd"/><path d="M114.6 23.3 L118.8 20.4 V26.2Z M118 22.6 H124 V24 H118Z"/>
   <rect x="164.6" y="18.4" width="11.4" height="9.6"/><rect x="178.8" y="18.4" width="11.4" height="9.6"/><rect x="176.6" y="20.6" width="1.6" height="5.4" fill="#0e6f84"/>
   <path d="M223.2 18.6 H250.2 V27.8 H223.2Z M226.6 21.4 V25 H246.8 V21.4Z" fill-rule="evenodd"/><rect x="231" y="22.5" width="11.4" height="1.5"/><rect x="229.2" y="20.8" width="6" height="4.8" fill="none" stroke="#1fb4d2" stroke-width="1.1"/><rect x="238.2" y="20.8" width="6" height="4.8" fill="none" stroke="#1fb4d2" stroke-width="1.1"/></g>
   <g stroke="#1fb4d2" stroke-width="1.5"><path d="M177.4 11.4 V14.4 M171 13 L172.6 15.4 M183.8 13 L182.2 15.4 M177.4 35 V32 M171 33.4 L172.6 31 M183.8 33.4 L182.2 31"/></g>
   <path d="M293.7 13.4 V33 M289.4 18.4 H282.4 V27.6 H289.4 M298 18.4 H305 V27.6 H298"/>
   <path d="M323 11 V34" stroke="#2a2a2e" stroke-width="1.4"/>
   <circle cx="353.4" cy="23" r="8.2"/><path d="M349.8 23 H357 M359.4 28.8 L362.2 31.6"/>
   <circle cx="539.8" cy="23" r="8.2"/><path d="M536.2 23 H543.4 M539.8 19.4 V26.6 M545.8 28.8 L548.6 31.6"/>
  </svg>
  <div style="left:1777px;top:553px;width:138px;height:2px;background:#34343a;border-radius:1px"></div>
  <div style="left:1777px;top:552.6px;width:12px;height:2.8px;background:#fff;border-radius:1px"></div>
  <div style="left:1786px;top:545.6px;width:11.4px;height:17px;background:#fff;border-radius:4.5px"></div>
  <svg style="left:0;top:0" width="1966" height="620"><rect x="236.1" y="585" width="1.8" height="13.6" fill="#6a6a6e"/><rect x="320.0" y="584" width="1.4" height="8" fill="#3a3a3e"/><rect x="361.9" y="584" width="1.4" height="8" fill="#3a3a3e"/><rect x="403.7" y="584" width="1.4" height="8" fill="#3a3a3e"/><rect x="445.6" y="584" width="1.4" height="8" fill="#3a3a3e"/><rect x="487.4" y="584" width="1.4" height="8" fill="#3a3a3e"/><rect x="529.2" y="584" width="1.4" height="8" fill="#3a3a3e"/><rect x="571.1" y="584" width="1.4" height="8" fill="#3a3a3e"/><rect x="613.0" y="584" width="1.4" height="8" fill="#3a3a3e"/><rect x="654.6" y="585" width="1.8" height="13.6" fill="#6a6a6e"/><rect x="738.5" y="584" width="1.4" height="8" fill="#3a3a3e"/><rect x="780.4" y="584" width="1.4" height="8" fill="#3a3a3e"/><rect x="822.2" y="584" width="1.4" height="8" fill="#3a3a3e"/><rect x="864.0" y="584" width="1.4" height="8" fill="#3a3a3e"/><rect x="905.9" y="584" width="1.4" height="8" fill="#3a3a3e"/><rect x="947.8" y="584" width="1.4" height="8" fill="#3a3a3e"/><rect x="989.6" y="584" width="1.4" height="8" fill="#3a3a3e"/><rect x="1031.5" y="584" width="1.4" height="8" fill="#3a3a3e"/><rect x="1073.1" y="585" width="1.8" height="13.6" fill="#6a6a6e"/><rect x="1157.0" y="584" width="1.4" height="8" fill="#3a3a3e"/><rect x="1198.9" y="584" width="1.4" height="8" fill="#3a3a3e"/><rect x="1240.7" y="584" width="1.4" height="8" fill="#3a3a3e"/><rect x="1282.5" y="584" width="1.4" height="8" fill="#3a3a3e"/><rect x="1324.4" y="584" width="1.4" height="8" fill="#3a3a3e"/><rect x="1366.2" y="584" width="1.4" height="8" fill="#3a3a3e"/><rect x="1408.1" y="584" width="1.4" height="8" fill="#3a3a3e"/><rect x="1450.0" y="584" width="1.4" height="8" fill="#3a3a3e"/><rect x="1491.6" y="585" width="1.8" height="13.6" fill="#6a6a6e"/><rect x="1575.5" y="584" width="1.4" height="8" fill="#3a3a3e"/><rect x="1617.3" y="584" width="1.4" height="8" fill="#3a3a3e"/><rect x="1659.2" y="584" width="1.4" height="8" fill="#3a3a3e"/><rect x="1701.0" y="584" width="1.4" height="8" fill="#3a3a3e"/><rect x="1742.9" y="584" width="1.4" height="8" fill="#3a3a3e"/><rect x="1784.8" y="584" width="1.4" height="8" fill="#3a3a3e"/><rect x="1826.6" y="584" width="1.4" height="8" fill="#3a3a3e"/><rect x="1868.5" y="584" width="1.4" height="8" fill="#3a3a3e"/><rect x="1910.1" y="585" width="1.8" height="13.6" fill="#6a6a6e"/></svg>
  <div class="rl" style="left:242.2px">00:00</div>
  <div class="rl" style="left:660.7px">00:30</div>
  <div class="rl" style="left:1079.2px">01:00</div>
  <div class="rl" style="left:1497.7px">01:30</div>
  <div class="rl" style="left:1916.2px">02:00</div>
  <div style="left:162.6px;top:578px;width:1.2px;height:475px;background:#222224"></div>
  <div style="left:232px;top:669px;width:1722px;height:34.4px;background:#242425"></div>
  <div style="left:232px;top:710px;width:1722px;height:34px;background:#1e1e1f"></div>
  <div style="left:232px;top:750.5px;width:1722px;height:34.5px;background:#1f1f20"></div>
  <div style="left:232px;top:790px;width:1722px;height:110px;background:#1f1f20"></div>
  <div style="left:8.3px;top:669.7px;width:143.8px;height:34px;background:#1f1f21;border-radius:6px"></div><div style="left:50.2px;top:675.2px;width:23px;height:23px;border-radius:50%;background:#2a2a2c"></div><div style="left:85.4px;top:675.2px;width:23px;height:23px;border-radius:50%;background:#2a2a2c"></div><div style="left:120.30000000000001px;top:675.2px;width:23px;height:23px;border-radius:50%;background:#212123"></div><svg style="left:8px;top:669.7px" width="144" height="34" fill="none" stroke="#dededf" stroke-width="1.6" stroke-linecap="round" stroke-linejoin="round"><g stroke="#7d7d81" stroke-width="1.5"><circle cx="18.8" cy="17" r="8"/><path d="M18.8 9 Q19.4 16.4 26.8 17"/></g><rect x="49" y="16.4" width="9.6" height="6.6" rx=".8" stroke-width="2.3"/><path d="M50.6 15.6 V13.6 A3.1 3.1 0 0 1 56.6 12.8" stroke-width="2"/><path d="M81.6 17 Q88.9 9.8 96.2 17 Q88.9 24.2 81.6 17Z" stroke-width="2"/><circle cx="88.9" cy="17" r="2.3" fill="#cfcfd1" stroke-width="1.4"/></svg>
  <div style="left:8.3px;top:710px;width:143.8px;height:34px;background:#1f1f21;border-radius:6px"></div><div style="left:50.2px;top:715.5px;width:23px;height:23px;border-radius:50%;background:#2a2a2c"></div><div style="left:85.4px;top:715.5px;width:23px;height:23px;border-radius:50%;background:#2a2a2c"></div><div style="left:120.30000000000001px;top:715.5px;width:23px;height:23px;border-radius:50%;background:#212123"></div><svg style="left:8px;top:710px" width="144" height="34" fill="none" stroke="#dededf" stroke-width="1.6" stroke-linecap="round" stroke-linejoin="round"><g stroke="#7d7d81" stroke-width="1.5"><circle cx="18.8" cy="17" r="8"/><path d="M18.8 9 Q19.4 16.4 26.8 17"/></g><rect x="49" y="16.4" width="9.6" height="6.6" rx=".8" stroke-width="2.3"/><path d="M50.6 15.6 V13.6 A3.1 3.1 0 0 1 56.6 12.8" stroke-width="2"/><path d="M81.6 17 Q88.9 9.8 96.2 17 Q88.9 24.2 81.6 17Z" stroke-width="2"/><circle cx="88.9" cy="17" r="2.3" fill="#cfcfd1" stroke-width="1.4"/></svg>
  <div style="left:8.3px;top:750.4px;width:143.8px;height:34px;background:#1f1f21;border-radius:6px"></div><div style="left:50.2px;top:755.9px;width:23px;height:23px;border-radius:50%;background:#2a2a2c"></div><div style="left:85.4px;top:755.9px;width:23px;height:23px;border-radius:50%;background:#2a2a2c"></div><div style="left:120.30000000000001px;top:755.9px;width:23px;height:23px;border-radius:50%;background:#212123"></div><svg style="left:8px;top:750.4px" width="144" height="34" fill="none" stroke="#dededf" stroke-width="1.6" stroke-linecap="round" stroke-linejoin="round"><g stroke="#7d7d81" stroke-width="1.5"><path d="M14.8 16.4 A4.6 4.6 0 1 1 23 16.4"/><path d="M18 18 A4.6 4.6 0 1 1 14.8 16.2"/><path d="M23 16.2 A4.6 4.6 0 1 1 18.8 19.8"/></g><rect x="49" y="16.4" width="9.6" height="6.6" rx=".8" stroke-width="2.3"/><path d="M50.6 15.6 V13.6 A3.1 3.1 0 0 1 56.6 12.8" stroke-width="2"/><path d="M81.6 17 Q88.9 9.8 96.2 17 Q88.9 24.2 81.6 17Z" stroke-width="2"/><circle cx="88.9" cy="17" r="2.3" fill="#cfcfd1" stroke-width="1.4"/></svg>
  <div style="left:8.3px;top:829.4px;width:143.8px;height:34px;background:#1f1f21;border-radius:6px"></div><div style="left:50.2px;top:834.9px;width:23px;height:23px;border-radius:50%;background:#2a2a2c"></div><div style="left:85.4px;top:834.9px;width:23px;height:23px;border-radius:50%;background:#2a2a2c"></div><div style="left:120.30000000000001px;top:834.9px;width:23px;height:23px;border-radius:50%;background:#2a2a2c"></div><svg style="left:8px;top:829.4px" width="144" height="34" fill="none" stroke="#dededf" stroke-width="1.6" stroke-linecap="round" stroke-linejoin="round"><g stroke="#7d7d81" stroke-width="1.5"><rect x="10.6" y="10.6" width="16.6" height="13"/><path d="M16.8 14.4 L21.4 17.1 L16.8 19.8Z" fill="#7d7d81" stroke="none"/></g><rect x="49" y="16.4" width="9.6" height="6.6" rx=".8" stroke-width="2.3"/><path d="M50.6 15.6 V13.6 A3.1 3.1 0 0 1 56.6 12.8" stroke-width="2"/><path d="M81.6 17 Q88.9 9.8 96.2 17 Q88.9 24.2 81.6 17Z" stroke-width="2"/><circle cx="88.9" cy="17" r="2.3" fill="#cfcfd1" stroke-width="1.4"/><path d="M117.6 14.6 H120.4 L124.2 11.4 V22.6 L120.4 19.4 H117.6Z"/><path d="M127 14.2 Q128.6 17 127 19.8 M129.8 12.4 Q132.6 17 129.8 21.6" stroke-width="1.4"/></svg>
  <div style="left:170.4px;top:819.4px;width:54.6px;height:54px;background:#2b2b2d;border-radius:6px;border:1.4px dashed #232325"></div>
  <div style="left:170.4px;top:834.5px;width:54.6px;text-align:center;font-size:17.4px;line-height:24px;color:#d8d8da;font-weight:500">封面</div>
  <div style="left:236.6px;top:700px;width:1.2px;height:96px;background:#7a5220"></div>
  <div style="left:232.4px;top:671.2px;width:522.6px;height:30px;background:#e0982a;border:solid #fbfbfb;border-width:2.2px 4px;border-radius:5px"></div>
  <div style="left:233.8px;top:680px;width:1.2px;height:12px;background:repeating-linear-gradient(180deg,#8a8a8a 0 1.5px,#fbfbfb 1.5px 3px)"></div><div style="left:752.2px;top:680px;width:1.2px;height:12px;background:repeating-linear-gradient(180deg,#8a8a8a 0 1.5px,#fbfbfb 1.5px 3px)"></div>
  <div style="left:242.6px;top:675.2px;width:20.4px;height:20px;background:#231f1e"></div>
  <svg style="left:242.6px;top:675.2px" width="21" height="20"><path d="M7 4.6 Q8.6 2.8 10 4.6 Q11.6 2.8 13 4.6 Q13.4 7 10 9.4 Q6.6 7 7 4.6Z" fill="#d2453e"/><path d="M8.6 11 Q10 9.8 11.4 11 Q11 12.8 10 13.4 Q9 12.8 8.6 11Z M9.2 15 Q10 14.2 10.8 15 Q10.6 16.2 10 16.6 Q9.4 16.2 9.2 15Z" fill="#c43c48"/></svg>
  <div style="left:237px;top:712.4px;width:514.4px;height:29.4px;background:#e0982a;border-radius:5px"></div>
  <div style="left:242.6px;top:716.2px;width:20.4px;height:20px;background:#231f1e"></div>
  <svg style="left:242.6px;top:716.2px" width="21" height="20" fill="none"><path d="M3.4 11.6 Q10.2 2.6 17.6 11.6" stroke="#f4f0ea" stroke-width="2.4"/><ellipse cx="4.4" cy="12.2" rx="2.6" ry="1.6" fill="#f4f0ea"/><ellipse cx="16.8" cy="12.2" rx="2.6" ry="1.6" fill="#f4f0ea"/></svg>
  <div style="left:237px;top:753.4px;width:514.4px;height:30px;background:#4d4a98;border-radius:5px"></div>
  <svg style="left:243px;top:758.4px" width="20" height="20" fill="none" stroke="#e6e4f4" stroke-width="1.5"><path d="M5.8 9.4 A4.4 4.4 0 1 1 13.8 9.4"/><path d="M8.8 11 A4.4 4.4 0 1 1 5.8 9.2"/><path d="M13.8 9.2 A4.4 4.4 0 1 1 9.8 12.6"/></svg>
  <div style="left:267.4px;top:757.4px;width:33px;height:22px;background:#5a57a4;border-radius:2px"></div>
  <div style="left:269.6px;top:756.6px;font-size:14.4px;line-height:24px;color:#f2f2f8;white-space:nowrap">青橙</div>
  <div style="left:237px;top:794.6px;width:513.6px;height:105px;background:#0e6f80;border-radius:5px;overflow:hidden"><div style="left:0;top:0;width:515px;height:25.4px;background:#07515e"></div><svg style="left:6.6px;top:3.6px" width="20" height="20" fill="none" stroke="#d8eef0" stroke-width="1.7" stroke-linecap="round"><path d="M14.4 4.6 A7 7 0 1 1 8.6 2.8"/><path d="M12.8 6.8 Q10 7.4 9.2 9.6"/><circle cx="9.6" cy="10.6" r="1.7"/></svg><div style="left:29.6px;top:2.4px;width:63px;height:20.6px;background:#14606e;border-radius:2px"></div><div style="left:100.6px;top:2.4px;width:88px;height:20.6px;background:#14606e;border-radius:2px"></div><div style="left:195.4px;top:2.4px;width:83px;height:20.6px;background:#14606e;border-radius:2px"></div><div class="ct" style="left:31.4px">变速1.1X</div><div class="ct" style="left:102.8px">下载 (1).mp4</div><div class="ct" style="left:197.6px">00:00:36:28</div><svg style="left:0;top:0" width="515" height="105"><defs><clipPath id="tc"><rect x="1.4" y="26" width="512" height="55.6"/></clipPath><filter id="tb"><feGaussianBlur stdDeviation=".45"/></filter></defs><g clip-path="url(#tc)"><g filter="url(#tb)"><rect x="0" y="26" width="515" height="36.4" fill="#f3f3f2"/><rect x="0" y="62" width="515" height="20" fill="#f8f9fb"/><rect x="1.4" y="26" width="6.6" height="36" fill="#e6ba68"/><rect x="8.0" y="26" width="2.2" height="36" fill="#f3e6c6"/><path d="M10.8 62 Q10.4 46 14.0 44 Q18.0 43.4 18.4 51 L18.0 62Z" fill="#dca27a"/><rect x="37.9" y="32.6" width=".9" height="28.4" fill="#777" opacity=".75"/><rect x="38.6" y="32.1" width=".9" height="22.1" fill="#777" opacity=".75"/><rect x="24.0" y="32.1" width=".9" height="23.1" fill="#777" opacity=".75"/><rect x="55.6" y="27.9" width=".9" height="15.3" fill="#777" opacity=".75"/><rect x="19.1" y="35.1" width=".9" height="24.6" fill="#777" opacity=".75"/><rect x="16.6" y="36.8" width=".9" height="24.2" fill="#777" opacity=".75"/><rect x="48.4" y="33.2" width=".9" height="11.8" fill="#777" opacity=".75"/><rect x="15.2" y="32.3" width=".9" height="9.4" fill="#777" opacity=".75"/><rect x="22.0" y="36.8" width="4.3" height=".9" fill="#888" opacity=".75"/><rect x="33.0" y="42.3" width="12.4" height=".9" fill="#888" opacity=".75"/><rect x="35.2" y="47.9" width="9.0" height=".9" fill="#888" opacity=".75"/><path d="M54.4 58 Q56.4 52 63.4 53 Q69.4 56 72.4 64 L81.4 62 H66.4 Q60.4 65 54.4 58Z" fill="#ecc0a0"/><path d="M55.4 59 L64.4 64" stroke="#dcdce4" stroke-width="1.6"/><path d="M54.0 58.2 L57.0 59.8" stroke="#444" stroke-width="1.6"/><path d="M24.3 67.6 H55.3" stroke="#4c5054" stroke-width="1.7" stroke-dasharray="2.2 .7 3 .6 1.4 .8 3.4 1" opacity=".85"/><rect x="36.4" y="79.4" width="26" height="2.2" fill="#e6dc52"/><rect x="74.0" y="26" width="6.6" height="36" fill="#e6ba68"/><rect x="80.6" y="26" width="2.2" height="36" fill="#f3e6c6"/><path d="M83.4 62 Q83.0 46 86.6 44 Q90.6 43.4 91.0 51 L90.6 62Z" fill="#dca27a"/><rect x="101.5" y="37.0" width=".9" height="24.0" fill="#e25a72" opacity=".75"/><rect x="123.8" y="30.2" width=".9" height="13.5" fill="#777" opacity=".75"/><rect x="90.7" y="34.7" width=".9" height="17.6" fill="#e25a72" opacity=".75"/><rect x="107.1" y="36.6" width=".9" height="24.4" fill="#777" opacity=".75"/><rect x="97.9" y="36.1" width=".9" height="19.3" fill="#e25a72" opacity=".75"/><rect x="107.7" y="27.7" width=".9" height="23.1" fill="#e25a72" opacity=".75"/><rect x="101.0" y="27.9" width=".9" height="16.0" fill="#e25a72" opacity=".75"/><rect x="126.4" y="28.2" width=".9" height="13.9" fill="#777" opacity=".75"/><rect x="89.4" y="52.3" width="5.8" height=".9" fill="#e25a72" opacity=".75"/><rect x="104.9" y="35.3" width="11.3" height=".9" fill="#888" opacity=".75"/><rect x="112.7" y="33.3" width="8.2" height=".9" fill="#888" opacity=".75"/><path d="M105.0 54 Q107.0 48 114.0 49 Q120.0 52 123.0 60 L132.0 62 H117.0 Q111.0 61 105.0 54Z" fill="#ecc0a0"/><path d="M106.0 55 L115.0 60" stroke="#dcdce4" stroke-width="1.6"/><path d="M104.6 54.2 L107.6 55.8" stroke="#444" stroke-width="1.6"/><path d="M92.2 67.6 H135.5" stroke="#4c5054" stroke-width="1.7" stroke-dasharray="2.2 .7 3 .6 1.4 .8 3.4 1" opacity=".85"/><rect x="109.0" y="79.4" width="26" height="2.2" fill="#e6dc52"/><rect x="146.6" y="26" width="6.6" height="36" fill="#e6ba68"/><rect x="153.2" y="26" width="2.2" height="36" fill="#f3e6c6"/><path d="M156.0 62 Q155.6 46 159.2 44 Q163.2 43.4 163.6 51 L163.2 62Z" fill="#dca27a"/><rect x="201.4" y="30.0" width=".9" height="29.2" fill="#777" opacity=".75"/><rect x="180.1" y="35.5" width=".9" height="23.4" fill="#777" opacity=".75"/><rect x="211.0" y="29.1" width=".9" height="14.2" fill="#e25a72" opacity=".75"/><rect x="176.7" y="30.0" width=".9" height="9.8" fill="#777" opacity=".75"/><rect x="189.9" y="29.4" width=".9" height="22.4" fill="#777" opacity=".75"/><rect x="183.2" y="36.6" width=".9" height="19.6" fill="#e25a72" opacity=".75"/><rect x="204.7" y="28.8" width=".9" height="11.7" fill="#e25a72" opacity=".75"/><rect x="202.1" y="29.5" width=".9" height="12.6" fill="#e25a72" opacity=".75"/><rect x="197.2" y="35.5" width="13.5" height=".9" fill="#e25a72" opacity=".75"/><rect x="183.7" y="41.8" width="5.0" height=".9" fill="#888" opacity=".75"/><rect x="198.1" y="36.7" width="11.0" height=".9" fill="#888" opacity=".75"/><path d="M179.6 42 Q181.6 36 188.6 37 Q194.6 40 197.6 48 L206.6 62 H191.6 Q185.6 49 179.6 42Z" fill="#ecc0a0"/><path d="M180.6 43 L189.6 48" stroke="#dcdce4" stroke-width="1.6"/><path d="M179.2 42.2 L182.2 43.8" stroke="#444" stroke-width="1.6"/><path d="M171.5 67.6 H205.8" stroke="#4c5054" stroke-width="1.7" stroke-dasharray="2.2 .7 3 .6 1.4 .8 3.4 1" opacity=".85"/><rect x="181.6" y="79.4" width="26" height="2.2" fill="#e6dc52"/><rect x="219.2" y="26" width="6.6" height="36" fill="#e6ba68"/><rect x="225.8" y="26" width="2.2" height="36" fill="#f3e6c6"/><path d="M228.6 62 Q228.2 46 231.8 44 Q235.8 43.4 236.2 51 L235.8 62Z" fill="#dca27a"/><rect x="247.5" y="28.8" width=".9" height="25.3" fill="#777" opacity=".75"/><rect x="244.1" y="32.6" width=".9" height="28.4" fill="#e25a72" opacity=".75"/><rect x="246.8" y="36.2" width=".9" height="12.9" fill="#777" opacity=".75"/><rect x="246.2" y="31.5" width=".9" height="9.5" fill="#777" opacity=".75"/><rect x="251.4" y="32.7" width=".9" height="11.2" fill="#777" opacity=".75"/><rect x="278.5" y="36.8" width=".9" height="23.8" fill="#e25a72" opacity=".75"/><rect x="262.6" y="28.4" width=".9" height="8.8" fill="#777" opacity=".75"/><rect x="279.5" y="34.0" width=".9" height="27.0" fill="#777" opacity=".75"/><rect x="257.6" y="43.5" width="11.3" height=".9" fill="#888" opacity=".75"/><rect x="272.2" y="32.1" width="9.5" height=".9" fill="#e25a72" opacity=".75"/><rect x="268.2" y="50.6" width="11.0" height=".9" fill="#e25a72" opacity=".75"/><path d="M274.2 38 Q276.2 32 283.2 33 Q289.2 36 292.2 44 L301.2 62 H286.2 Q280.2 45 274.2 38Z" fill="#ecc0a0"/><path d="M275.2 39 L284.2 44" stroke="#dcdce4" stroke-width="1.6"/><path d="M273.8 38.2 L276.8 39.8" stroke="#444" stroke-width="1.6"/><path d="M245.2 67.6 H273.6" stroke="#4c5054" stroke-width="1.7" stroke-dasharray="2.2 .7 3 .6 1.4 .8 3.4 1" opacity=".85"/><rect x="254.2" y="79.4" width="26" height="2.2" fill="#e6dc52"/><rect x="291.8" y="26" width="6.6" height="36" fill="#e6ba68"/><rect x="298.4" y="26" width="2.2" height="36" fill="#f3e6c6"/><path d="M301.2 62 Q300.8 46 304.4 44 Q308.4 43.4 308.8 51 L308.4 62Z" fill="#dca27a"/><rect x="340.4" y="36.0" width=".9" height="25.0" fill="#777" opacity=".75"/><rect x="345.9" y="35.6" width=".9" height="21.7" fill="#e25a72" opacity=".75"/><rect x="324.7" y="32.8" width=".9" height="22.6" fill="#777" opacity=".75"/><rect x="338.0" y="36.9" width=".9" height="24.1" fill="#e25a72" opacity=".75"/><rect x="325.0" y="34.4" width=".9" height="21.9" fill="#777" opacity=".75"/><rect x="348.4" y="27.8" width=".9" height="26.0" fill="#777" opacity=".75"/><rect x="336.1" y="31.8" width=".9" height="13.5" fill="#e25a72" opacity=".75"/><rect x="330.7" y="33.1" width=".9" height="27.9" fill="#777" opacity=".75"/><rect x="305.3" y="38.4" width="10.8" height=".9" fill="#888" opacity=".75"/><rect x="311.6" y="55.4" width="10.6" height=".9" fill="#888" opacity=".75"/><rect x="340.5" y="39.2" width="10.7" height=".9" fill="#888" opacity=".75"/><path d="M330.8 40 Q332.8 34 339.8 35 Q345.8 38 348.8 46 L357.8 62 H342.8 Q336.8 47 330.8 40Z" fill="#ecc0a0"/><path d="M331.8 41 L340.8 46" stroke="#dcdce4" stroke-width="1.6"/><path d="M330.4 40.2 L333.4 41.8" stroke="#444" stroke-width="1.6"/><path d="M312.0 67.6 H351.3" stroke="#4c5054" stroke-width="1.7" stroke-dasharray="2.2 .7 3 .6 1.4 .8 3.4 1" opacity=".85"/><rect x="326.8" y="79.4" width="26" height="2.2" fill="#e6dc52"/><rect x="364.4" y="26" width="6.6" height="36" fill="#e6ba68"/><rect x="371.0" y="26" width="2.2" height="36" fill="#f3e6c6"/><path d="M373.8 62 Q373.4 46 377.0 44 Q381.0 43.4 381.4 51 L381.0 62Z" fill="#dca27a"/><rect x="424.9" y="35.8" width=".9" height="17.2" fill="#e25a72" opacity=".75"/><rect x="393.9" y="28.4" width=".9" height="19.9" fill="#e25a72" opacity=".75"/><rect x="421.5" y="34.1" width=".9" height="26.9" fill="#777" opacity=".75"/><rect x="386.2" y="31.5" width=".9" height="14.6" fill="#777" opacity=".75"/><rect x="398.9" y="33.3" width=".9" height="19.9" fill="#777" opacity=".75"/><rect x="421.0" y="36.8" width=".9" height="18.9" fill="#777" opacity=".75"/><rect x="379.0" y="35.7" width=".9" height="9.0" fill="#e25a72" opacity=".75"/><rect x="407.1" y="30.1" width=".9" height="27.0" fill="#777" opacity=".75"/><rect x="382.8" y="42.7" width="4.2" height=".9" fill="#e25a72" opacity=".75"/><rect x="386.9" y="33.9" width="4.5" height=".9" fill="#e25a72" opacity=".75"/><rect x="395.3" y="47.6" width="10.6" height=".9" fill="#e25a72" opacity=".75"/><path d="M411.4 44 Q413.4 38 420.4 39 Q426.4 42 429.4 50 L438.4 62 H423.4 Q417.4 51 411.4 44Z" fill="#ecc0a0"/><path d="M412.4 45 L421.4 50" stroke="#dcdce4" stroke-width="1.6"/><path d="M411.0 44.2 L414.0 45.8" stroke="#444" stroke-width="1.6"/><path d="M390.9 67.6 H427.3" stroke="#4c5054" stroke-width="1.7" stroke-dasharray="2.2 .7 3 .6 1.4 .8 3.4 1" opacity=".85"/><rect x="399.4" y="79.4" width="26" height="2.2" fill="#e6dc52"/><rect x="437.0" y="26" width="6.6" height="36" fill="#e6ba68"/><rect x="443.6" y="26" width="2.2" height="36" fill="#f3e6c6"/><path d="M446.4 62 Q446.0 46 449.6 44 Q453.6 43.4 454.0 51 L453.6 62Z" fill="#dca27a"/><rect x="460.4" y="31.8" width=".9" height="12.3" fill="#777" opacity=".75"/><rect x="474.6" y="34.1" width=".9" height="12.3" fill="#777" opacity=".75"/><rect x="468.0" y="34.0" width=".9" height="20.5" fill="#e25a72" opacity=".75"/><rect x="489.3" y="30.9" width=".9" height="27.0" fill="#e25a72" opacity=".75"/><rect x="454.5" y="36.3" width=".9" height="24.7" fill="#777" opacity=".75"/><rect x="473.6" y="33.3" width=".9" height="27.7" fill="#777" opacity=".75"/><rect x="479.6" y="35.8" width=".9" height="25.2" fill="#e25a72" opacity=".75"/><rect x="474.1" y="33.5" width=".9" height="12.9" fill="#e25a72" opacity=".75"/><rect x="482.7" y="48.0" width="11.2" height=".9" fill="#888" opacity=".75"/><rect x="486.0" y="57.5" width="13.8" height=".9" fill="#e25a72" opacity=".75"/><rect x="481.6" y="39.0" width="13.1" height=".9" fill="#e25a72" opacity=".75"/><path d="M492.0 36 Q494.0 30 501.0 31 Q507.0 34 510.0 42 L519.0 62 H504.0 Q498.0 43 492.0 36Z" fill="#ecc0a0"/><path d="M493.0 37 L502.0 42" stroke="#dcdce4" stroke-width="1.6"/><path d="M491.6 36.2 L494.6 37.8" stroke="#444" stroke-width="1.6"/><path d="M456.2 67.6 H478.2" stroke="#4c5054" stroke-width="1.7" stroke-dasharray="2.2 .7 3 .6 1.4 .8 3.4 1" opacity=".85"/><rect x="472.0" y="79.4" width="26" height="2.2" fill="#e6dc52"/><rect x="509.6" y="26" width="6.6" height="36" fill="#e6ba68"/><rect x="516.2" y="26" width="2.2" height="36" fill="#f3e6c6"/><path d="M519.0 62 Q518.6 46 522.2 44 Q526.2 43.4 526.6 51 L526.2 62Z" fill="#dca27a"/><rect x="545.5" y="32.5" width=".9" height="26.4" fill="#777" opacity=".75"/><rect x="524.1" y="35.1" width=".9" height="9.5" fill="#e25a72" opacity=".75"/><rect x="531.6" y="30.4" width=".9" height="26.9" fill="#777" opacity=".75"/><rect x="530.3" y="32.2" width=".9" height="25.4" fill="#e25a72" opacity=".75"/><rect x="558.4" y="36.5" width=".9" height="19.8" fill="#e25a72" opacity=".75"/><rect x="527.1" y="29.2" width=".9" height="20.6" fill="#777" opacity=".75"/><rect x="560.5" y="33.4" width=".9" height="20.5" fill="#e25a72" opacity=".75"/><rect x="551.7" y="30.1" width=".9" height="17.1" fill="#e25a72" opacity=".75"/><rect x="558.6" y="35.8" width="12.5" height=".9" fill="#e25a72" opacity=".75"/><rect x="543.6" y="46.0" width="6.0" height=".9" fill="#e25a72" opacity=".75"/><rect x="542.7" y="46.9" width="4.3" height=".9" fill="#e25a72" opacity=".75"/><path d="M560.6 36 Q562.6 30 569.6 31 Q575.6 34 578.6 42 L587.6 62 H572.6 Q566.6 43 560.6 36Z" fill="#ecc0a0"/><path d="M561.6 37 L570.6 42" stroke="#dcdce4" stroke-width="1.6"/><path d="M560.2 36.2 L563.2 37.8" stroke="#444" stroke-width="1.6"/><path d="M530.8 67.6 H560.4" stroke="#4c5054" stroke-width="1.7" stroke-dasharray="2.2 .7 3 .6 1.4 .8 3.4 1" opacity=".85"/><rect x="544.6" y="79.4" width="26" height="2.2" fill="#e6dc52"/></g></g></svg><div style="left:0;top:81.6px;width:515px;height:24px;background:#0e6f80"></div><div style="left:0;top:81.6px;width:515px;height:7.6px;background:#0b4a54"></div><div style="left:0;top:83.2px;width:515px;height:4px;background:repeating-linear-gradient(90deg,#a8953e 0 .95px,transparent .95px 2.33px)"></div><div style="left:84px;top:83px;width:4px;height:4.6px;background:#0b4a54"></div><div style="left:120px;top:83px;width:4px;height:4.6px;background:#0b4a54"></div><div style="left:165px;top:83px;width:4px;height:4.6px;background:#0b4a54"></div><div style="left:222px;top:83px;width:4px;height:4.6px;background:#0b4a54"></div><div style="left:262px;top:83px;width:4px;height:4.6px;background:#0b4a54"></div><div style="left:310px;top:83px;width:4px;height:4.6px;background:#0b4a54"></div><div style="left:352px;top:83px;width:4px;height:4.6px;background:#0b4a54"></div><div style="left:390px;top:83px;width:4px;height:4.6px;background:#0b4a54"></div><div style="left:432px;top:83px;width:4px;height:4.6px;background:#0b4a54"></div><div style="left:470px;top:83px;width:4px;height:4.6px;background:#0b4a54"></div><div style="left:0;top:89.2px;width:515px;height:15.8px;background:repeating-linear-gradient(90deg,#1b8496 0 .9px,#0e6f80 .9px 2.33px)"></div><div style="left:0;top:94.6px;width:515px;height:1.2px;background:#0c6272;opacity:.8"></div>
</div>
  <div style="left:237px;top:894.6px;width:10px;height:1.6px;background:#e8f4f6"></div><svg style="left:243px;top:891px" width="8" height="9"><path d="M1 1 L6 4.4 L1 7.8Z" fill="#e8f4f6"/></svg>
  <div style="left:246px;top:596px;width:2.6px;height:435px;background:rgba(226,226,228,.88)"></div>
  <svg style="left:239px;top:578px" width="17" height="23"><path d="M2.4 3.6 Q2.4 2 4 2 H12.6 Q14.2 2 14.2 3.6 V13 Q14.2 19.6 8.3 19.6 Q2.4 19.6 2.4 13Z" fill="#1a1a1c" stroke="#fdfdfd" stroke-width="2.3"/></svg>
  <div style="left:167px;top:1040.4px;width:1784px;height:9px;background:#2f2f33;border-radius:4.5px"></div>
</div>
</body>
</html>
